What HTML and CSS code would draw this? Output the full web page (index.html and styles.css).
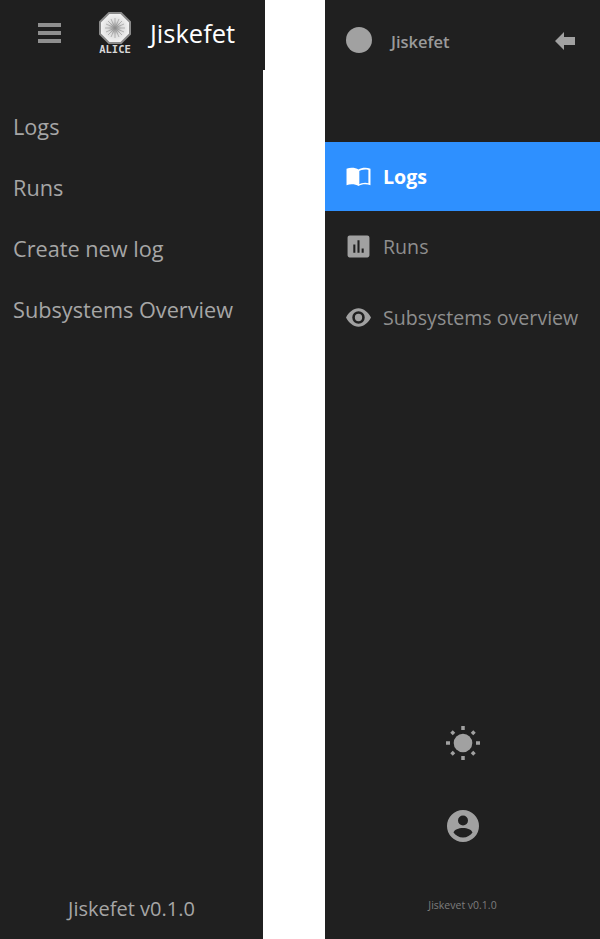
FILE: index.html
```html
<!DOCTYPE html>
<html lang="en">
<head>
<meta charset="utf-8">
<title>Jiskefet</title>
<link rel="stylesheet" href="styles.css">
</head>
<body>
<div class="page">
  <aside class="old">
    <header class="old-head">
      <svg class="burger" viewBox="0 0 23 20"><path d="M0 0h23v4H0zM0 8h23v4H0zM0 16h23v4H0z"/></svg>
      <span class="logo">
        <svg class="logo-mark" viewBox="0 0 32 32">
          <defs>
            <radialGradient id="lens" cx="50%" cy="50%" r="50%">
              <stop offset="0" stop-color="#9a9a9a"/>
              <stop offset=".45" stop-color="#dcdcdc"/>
              <stop offset="1" stop-color="#f4f4f4"/>
            </radialGradient>
          </defs>
          <polygon class="logo-ring" fill="url(#lens)" points="10,1 22,1 31,10 31,22 22,31 10,31 1,22 1,10"/>
          <path class="logo-rays" d="M16 6v20M6 16h20M9 9l14 14M23 9L9 23M12 7l8 18M20 7l-8 18M7 12l18 8M25 12L7 20"/>
        </svg>
        <span class="logo-text">ALICE</span>
      </span>
      <span class="old-title">Jiskefet</span>
    </header>
    <nav class="old-nav">
      <a>Logs</a>
      <a>Runs</a>
      <a>Create new log</a>
      <a>Subsystems Overview</a>
    </nav>
    <footer class="old-foot">Jiskefet v0.1.0</footer>
  </aside>
  <aside class="new">
    <header class="new-head">
      <span class="dot"></span>
      <span class="new-title">Jiskefet</span>
      <svg class="back" viewBox="0 0 20 18"><path d="M0 9L9 0v5h11v8H9v5z"/></svg>
    </header>
    <nav class="new-nav">
      <a class="item active">
        <svg class="ico" viewBox="0 0 24 24"><path d="M12 5.200C10.400 4 8 3.500 5.500 3.500 3.800 3.500 2 3.800.5 4.500v16c1.500-.7 3.300-1 5-1 2.500 0 4.900.5 6.500 1.700 1.600-1.200 4-1.700 6.500-1.700 1.700 0 3.500.3 5 1v-16c-1.500-.7-3.300-1-5-1-2.500 0-4.900.5-6.500 1.700zm9.500 13.300c-1-.3-2-.5-3-.5-2.500 0-4.900.7-5.700 1.500V6.800c.8-.8 3.200-1.500 5.700-1.500 1 0 2 .1 3 .4z"/></svg>
        <span>Logs</span>
      </a>
      <a class="item">
        <svg class="ico" viewBox="0 0 24 24"><path d="M3.500 1.500h17c1.100 0 2 .9 2 2v17c0 1.100-.9 2-2 2h-17c-1.100 0-2-.9-2-2v-17c0-1.100.9-2 2-2zm3.500 8.500v8h2v-8zm4-4v12h2V6zm4 8v4h2v-4z" fill-rule="evenodd"/></svg>
        <span>Runs</span>
      </a>
      <a class="item">
        <svg class="ico ico-eye" viewBox="0 0 24 24"><path fill-rule="evenodd" d="M12 3.200C7 3.200 2.700 7 0 12c2.700 5 7 8.800 12 8.800S21.300 17 24 12C21.300 7 17 3.200 12 3.200zm0 14.800a6 6 0 1 1 0-12 6 6 0 0 1 0 12zm0-2.500a3.500 3.500 0 1 0 0-7 3.500 3.500 0 0 0 0 7z"/></svg>
        <span>Subsystems overview</span>
      </a>
    </nav>
    <div class="tools">
      <svg class="sun" viewBox="0 0 34 34">
        <circle cx="17" cy="17" r="9.300"/>
        <path class="sun-rays" d="M17 0v4M17 30v4M0 17h4M30 17h4M5.500 5.500l2.500 2.500M26 26l2.500 2.500M28.500 5.500L26 8M8 26l-2.500 2.500"/>
      </svg>
      <svg class="user" viewBox="0 0 32 32"><path fill-rule="evenodd" d="M16 0a16 16 0 1 1 0 32 16 16 0 0 1 0-32zm0 5.500a5 5 0 1 0 0 10 5 5 0 0 0 0-10zM16 18c-4.500 0-8.500 1.700-9.500 4.500 2 2.900 5.500 5 9.500 5s7.500-2.100 9.500-5c-1-2.800-5-4.500-9.500-4.500z"/></svg>
    </div>
    <footer class="new-foot">Jiskevet v0.1.0</footer>
  </aside>
</div>
</body>
</html>
```
FILE: styles.css
```css
* { box-sizing: border-box; }
html, body { margin: 0; height: 100%; background: #fff; }
body { font-family: "Open Sans", "Noto Sans", sans-serif; }
.page { display: flex; justify-content: space-between; height: 939px; overflow: hidden; }

.old { width: 263px; background: #202020; display: flex; flex-direction: column; }
.old-head { width: 265px; height: 70px; flex: none; background: #1f1f1f; display: flex; align-items: center; padding-left: 38px; }
.burger { width: 23px; height: 20px; fill: #8f8f8f; flex: none; margin-top: -4px; }
.logo { display: flex; flex-direction: column; align-items: center; margin-left: 37px; margin-top: -3px; flex: none; width: 34px; }
.logo-mark { width: 32px; height: 32px; }
.logo-ring { stroke: #8a8a8a; stroke-width: 2; }
.logo-rays { stroke: #8f8f8f; stroke-width: .6; fill: none; }
.logo-text { font-family: "DejaVu Sans Mono", monospace; font-size: 10.500px; font-weight: 700; line-height: 11px; color: #d8d8d8; }
.old-title { color: #fff; font-size: 25.500px; margin-left: 18px; margin-top: -4px; line-height: 32px; }
.old-nav { display: flex; flex-direction: column; padding: 42px 0 0 13px; gap: 31px; }
.old-nav a { color: #a6a6a6; font-size: 21.700px; line-height: 30px; }
.old-foot { margin-top: auto; text-align: center; color: #a6a6a6; font-size: 20px; line-height: 26px; padding-bottom: 17px; }

.new { width: 275px; background: #202020; display: flex; flex-direction: column; }
.new-head { height: 142px; flex: none; display: flex; align-items: flex-start; padding: 27px 25px 0 21px; }
.dot { width: 26px; height: 26px; border-radius: 50%; background: #a1a1a1; flex: none; }
.new-title { color: #9a9a9a; font-size: 16.500px; font-weight: 600; line-height: 30px; margin-left: 19px; }
.back { width: 20px; height: 18px; fill: #a1a1a1; margin-left: auto; margin-top: 5px; }

.new-nav { display: flex; flex-direction: column; }
.item { display: flex; align-items: center; height: 69px; padding-left: 21px; gap: 12px; color: #8e8e8e; font-size: 19.600px; }
.item + .item { height: 71px; }
.item.active { background: #2e90ff; color: #fff; font-weight: 700; }
.ico { width: 25px; height: 25px; fill: currentColor; flex: none; }
.item:not(.active) .ico { fill: #a1a1a1; }

.tools { margin-top: auto; display: flex; flex-direction: column; align-items: center; gap: 50px; }
.sun { width: 34px; height: 34px; fill: #a1a1a1; }
.sun-rays { stroke: #a1a1a1; stroke-width: 3.500; fill: none; }
.user { width: 32px; height: 32px; fill: #a1a1a1; }
.new-foot { text-align: center; color: #7d7d7d; font-size: 10.500px; line-height: 14px; padding: 56px 0 27px; }
```
